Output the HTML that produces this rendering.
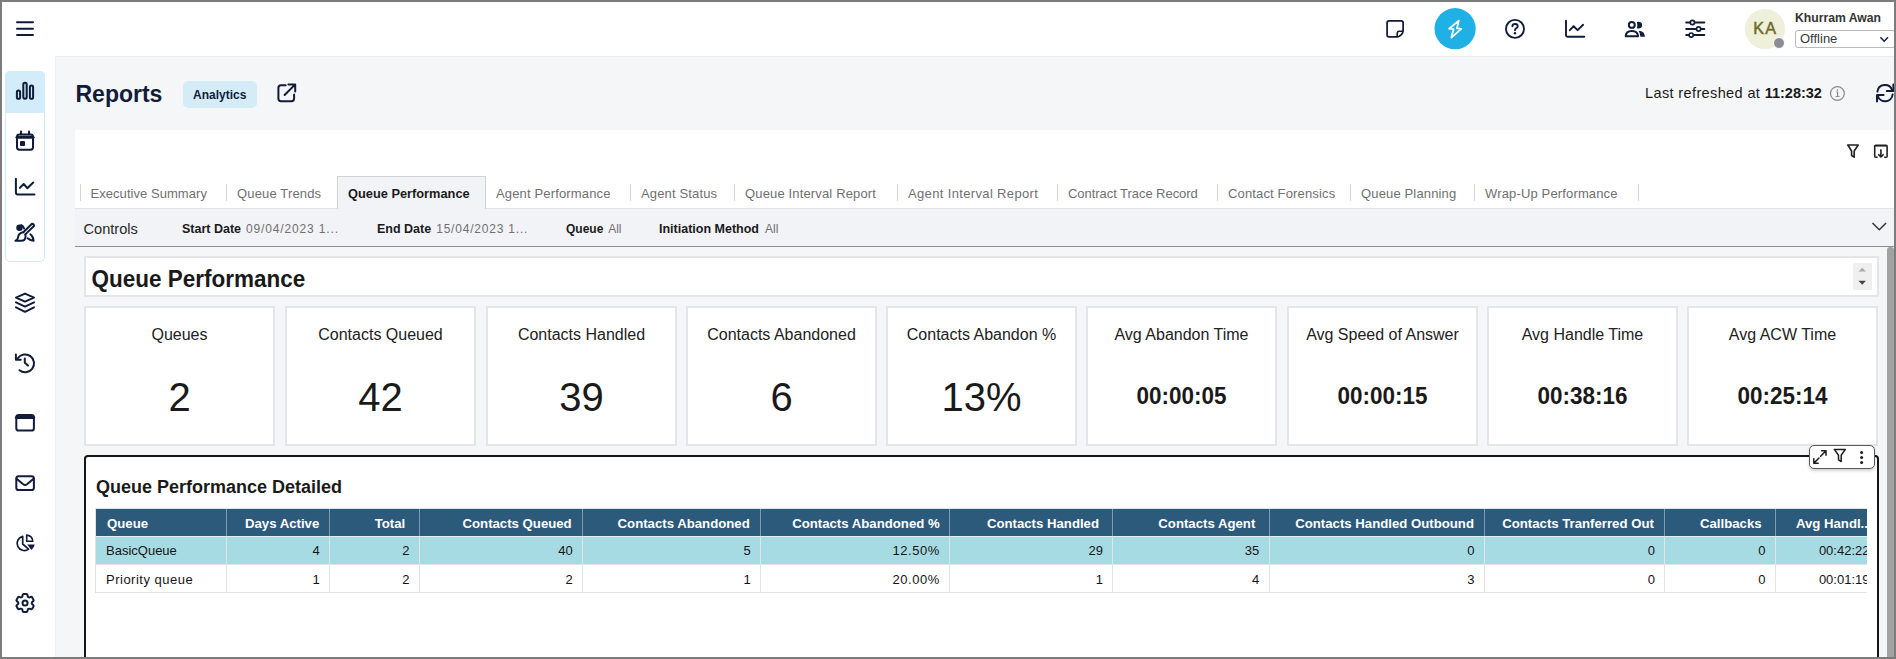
<!DOCTYPE html>
<html><head><meta charset="utf-8">
<style>
*{box-sizing:border-box;margin:0;padding:0}
html,body{width:1896px;height:659px;overflow:hidden;background:#fff;font-family:"Liberation Sans",sans-serif;}
.a{position:absolute}
.t{position:absolute;white-space:nowrap;line-height:1}
svg.ov{position:absolute;left:0;top:0;width:1896px;height:659px;overflow:visible}
.nv{stroke:#111c3a;fill:none;stroke-width:2;stroke-linecap:round;stroke-linejoin:round}
.tab{position:absolute;top:187px;font-size:13px;color:#707070;white-space:nowrap;line-height:1;letter-spacing:0.15px}
.sep{position:absolute;top:184px;width:1px;height:17px;background:#d5d5d5}
.kpi{position:absolute;top:306px;width:191px;height:140px;background:#fff;border:2px solid #e4e5e8}
.kl{position:absolute;left:0;right:0;top:19px;text-align:center;font-size:16px;color:#222;line-height:1;white-space:nowrap}
.kv{position:absolute;left:0;right:0;top:68.8px;text-align:center;font-size:40px;color:#1a1a1a;line-height:1}
.th{position:absolute;top:8.5px;font-size:13.2px;font-weight:bold;color:#fff;white-space:nowrap;line-height:1}
.td{position:absolute;font-size:13px;color:#141414;white-space:nowrap;line-height:1}
.kt{position:absolute;left:0;right:0;top:78px;text-align:center;font-size:22.5px;font-weight:bold;color:#1a1a1a;line-height:1;transform:scaleY(1.1);transform-origin:50% 19px}
</style></head><body>
<!-- page bg -->
<div class="a" style="left:55px;top:56px;width:1841px;height:603px;background:#f5f6f8;border-top:1px solid #ebecee;border-left:1px solid #f0f1f3"></div>

<!-- sidebar group -->
<div class="a" style="left:5px;top:71px;width:40px;height:191px;border:1px solid #cfe9f5;border-radius:5px;background:#fff"></div>
<div class="a" style="left:5px;top:71px;width:40px;height:42px;background:#d2edf9;border-radius:5px 5px 0 0"></div>

<!-- Reports header -->
<div class="t" style="left:75.5px;top:82.5px;font-size:23px;font-weight:bold;color:#111c3a">Reports</div>
<div class="a" style="left:183px;top:81px;width:74px;height:27px;background:#d3ecf8;border-radius:5px"></div>
<div class="t" style="left:193px;top:89px;font-size:12px;font-weight:bold;color:#111c3a">Analytics</div>
<div class="t" style="left:1645px;top:86px;font-size:14.5px;letter-spacing:0.38px;color:#1a1a1a">Last refreshed at <b style="letter-spacing:0">11:28:32</b></div>

<!-- user -->
<div class="a" style="left:1745px;top:8.7px;width:40px;height:40px;border-radius:50%;background:#eef0d9"></div>
<div class="t" style="left:1753.2px;top:20px;font-size:16.2px;letter-spacing:1.3px;color:#6e6a26;-webkit-text-stroke:0.45px #6e6a26">KA</div>
<div class="a" style="left:1773px;top:36.7px;width:12px;height:12px;border-radius:50%;background:#8a8c99;border:1px solid #fff"></div>
<div class="t" style="left:1795px;top:11.7px;font-size:12.2px;font-weight:bold;color:#333">Khurram Awan</div>
<div class="a" style="left:1795px;top:30px;width:101px;height:18px;border:1px solid #b9b9b9;border-radius:3px;background:#fff"></div>
<div class="t" style="left:1800px;top:32.3px;font-size:13px;color:#3a3a3a">Offline</div>

<!-- white tabs card -->
<div class="a" style="left:75px;top:130px;width:1819px;height:78px;background:#fff"></div>
<div class="a" style="left:75px;top:208px;width:1819px;height:1px;background:#e3e3e3"></div>
<div class="a" style="left:75px;top:209px;width:1819px;height:37px;background:#f2f3f6"></div>
<div class="a" style="left:75px;top:246px;width:1819px;height:1px;background:#8c8c8c"></div>
<!-- active tab -->
<div class="a" style="left:337px;top:176px;width:149px;height:33px;background:#f2f3f6;border:1px solid #d3d3d3;border-bottom:none"></div>
<div class="sep" style="left:80px"></div>
<div class="tab" style="left:90.5px;letter-spacing:0.05px">Executive Summary</div>
<div class="sep" style="left:226px"></div>
<div class="tab" style="left:237px">Queue Trends</div>
<div class="tab" style="left:348px;top:188px;font-weight:bold;color:#1a1a1a;font-size:12.8px;letter-spacing:0">Queue Performance</div>
<div class="tab" style="left:496px">Agent Performance</div>
<div class="sep" style="left:630px"></div>
<div class="tab" style="left:641px">Agent Status</div>
<div class="sep" style="left:734px"></div>
<div class="tab" style="left:745px">Queue Interval Report</div>
<div class="sep" style="left:897px"></div>
<div class="tab" style="left:908px;letter-spacing:0.35px">Agent Interval Report</div>
<div class="sep" style="left:1057px"></div>
<div class="tab" style="left:1068px;letter-spacing:-0.05px">Contract Trace Record</div>
<div class="sep" style="left:1217px"></div>
<div class="tab" style="left:1228px">Contact Forensics</div>
<div class="sep" style="left:1350px"></div>
<div class="tab" style="left:1361px">Queue Planning</div>
<div class="sep" style="left:1474px"></div>
<div class="tab" style="left:1485px">Wrap-Up Performance</div>
<div class="sep" style="left:1638px"></div>

<!-- controls -->
<div class="t" style="left:83.5px;top:222px;font-size:14.6px;color:#2a2a2a">Controls</div>
<div class="t" style="left:182px;top:223px;font-size:12.5px;font-weight:bold;color:#1a1a1a">Start Date <span style="font-weight:normal;color:#707070;letter-spacing:0.85px;font-size:12px;margin-left:1.5px">09/04/2023 1...</span></div>
<div class="t" style="left:377px;top:223px;font-size:12.5px;font-weight:bold;color:#1a1a1a">End Date <span style="font-weight:normal;color:#707070;letter-spacing:0.8px;font-size:12px;margin-left:1.5px">15/04/2023 1...</span></div>
<div class="t" style="left:566px;top:223px;font-size:12px;font-weight:bold;color:#1a1a1a">Queue <span style="font-weight:normal;color:#707070;margin-left:1.5px">All</span></div>
<div class="t" style="left:659px;top:223px;font-size:12.5px;font-weight:bold;color:#1a1a1a">Initiation Method <span style="font-weight:normal;color:#707070;font-size:12px;margin-left:2.5px">All</span></div>

<!-- title card -->
<div class="a" style="left:84px;top:256px;width:1795px;height:41px;background:#fff;border:2px solid #e4e5e8"></div>
<div class="t" style="left:91.5px;top:268.5px;font-size:22.5px;font-weight:bold;color:#1a1a1a;transform:scaleY(1.08);transform-origin:0 19px">Queue Performance</div>
<div class="a" style="left:1853px;top:263px;width:19px;height:27px;background:#efefef"></div>

<!-- KPI cards -->
<div class="kpi" style="left:84px"><div class="kl">Queues</div><div class="kv">2</div></div>
<div class="kpi" style="left:285px"><div class="kl">Contacts Queued</div><div class="kv">42</div></div>
<div class="kpi" style="left:486px"><div class="kl">Contacts Handled</div><div class="kv">39</div></div>
<div class="kpi" style="left:686px"><div class="kl">Contacts Abandoned</div><div class="kv">6</div></div>
<div class="kpi" style="left:886px"><div class="kl">Contacts Abandon %</div><div class="kv">13%</div></div>
<div class="kpi" style="left:1086px"><div class="kl">Avg Abandon Time</div><div class="kt">00:00:05</div></div>
<div class="kpi" style="left:1287px"><div class="kl">Avg Speed of Answer</div><div class="kt">00:00:15</div></div>
<div class="kpi" style="left:1487px"><div class="kl">Avg Handle Time</div><div class="kt">00:38:16</div></div>
<div class="kpi" style="left:1687px"><div class="kl">Avg ACW Time</div><div class="kt">00:25:14</div></div>

<!-- table card -->
<div class="a" style="left:84px;top:455px;width:1795px;height:230px;background:#fff;border:2px solid #161616;border-radius:4px"></div>
<div class="t" style="left:96px;top:478px;font-size:18px;font-weight:bold;color:#1a1a1a">Queue Performance Detailed</div>
<!--TBL-->
<div class="a" style="left:95px;top:508px;width:1772px;height:85px;overflow:hidden">
<div class="a" style="left:0;top:0;width:1800px;height:85px;border:1px solid #dfe1e4;background:#fff"></div>
<div class="a" style="left:1px;top:1px;width:1800px;height:27px;background:#2b5a7a"></div>
<div class="a" style="left:1px;top:28px;width:1800px;height:28px;background:#a7dbe4"></div>
<div class="a" style="left:1px;top:28px;width:1800px;height:1px;background:#e4eef2"></div>
<div class="a" style="left:1px;top:56px;width:1800px;height:1px;background:#e2e4e7"></div>
<div class="a" style="left:131.2px;top:1px;width:1px;height:27px;background:#7d9cb0"></div>
<div class="a" style="left:131.2px;top:28px;width:1px;height:56px;background:#e2e4e7"></div>
<div class="a" style="left:234.0px;top:1px;width:1px;height:27px;background:#7d9cb0"></div>
<div class="a" style="left:234.0px;top:28px;width:1px;height:56px;background:#e2e4e7"></div>
<div class="a" style="left:323.7px;top:1px;width:1px;height:27px;background:#7d9cb0"></div>
<div class="a" style="left:323.7px;top:28px;width:1px;height:56px;background:#e2e4e7"></div>
<div class="a" style="left:487.0px;top:1px;width:1px;height:27px;background:#7d9cb0"></div>
<div class="a" style="left:487.0px;top:28px;width:1px;height:56px;background:#e2e4e7"></div>
<div class="a" style="left:665.0px;top:1px;width:1px;height:27px;background:#7d9cb0"></div>
<div class="a" style="left:665.0px;top:28px;width:1px;height:56px;background:#e2e4e7"></div>
<div class="a" style="left:854.0px;top:1px;width:1px;height:27px;background:#7d9cb0"></div>
<div class="a" style="left:854.0px;top:28px;width:1px;height:56px;background:#e2e4e7"></div>
<div class="a" style="left:1017.3px;top:1px;width:1px;height:27px;background:#7d9cb0"></div>
<div class="a" style="left:1017.3px;top:28px;width:1px;height:56px;background:#e2e4e7"></div>
<div class="a" style="left:1173.6px;top:1px;width:1px;height:27px;background:#7d9cb0"></div>
<div class="a" style="left:1173.6px;top:28px;width:1px;height:56px;background:#e2e4e7"></div>
<div class="a" style="left:1388.7px;top:1px;width:1px;height:27px;background:#7d9cb0"></div>
<div class="a" style="left:1388.7px;top:28px;width:1px;height:56px;background:#e2e4e7"></div>
<div class="a" style="left:1569.2px;top:1px;width:1px;height:27px;background:#7d9cb0"></div>
<div class="a" style="left:1569.2px;top:28px;width:1px;height:56px;background:#e2e4e7"></div>
<div class="a" style="left:1679.9px;top:1px;width:1px;height:27px;background:#7d9cb0"></div>
<div class="a" style="left:1679.9px;top:28px;width:1px;height:56px;background:#e2e4e7"></div>
<div class="th" style="left:12.0px">Queue</div>
<div class="th" style="left:131.2px;width:93.1px;text-align:right">Days Active</div>
<div class="th" style="left:234.0px;width:76.2px;text-align:right">Total</div>
<div class="th" style="left:323.7px;width:153.0px;text-align:right">Contacts Queued</div>
<div class="th" style="left:487.0px;width:167.7px;text-align:right">Contacts Abandoned</div>
<div class="th" style="left:665.0px;width:179.7px;text-align:right">Contacts Abandoned %</div>
<div class="th" style="left:854.0px;width:150.0px;text-align:right">Contacts Handled</div>
<div class="th" style="left:1017.3px;width:143.0px;text-align:right">Contacts Agent</div>
<div class="th" style="left:1173.6px;width:205.4px;text-align:right">Contacts Handled Outbound</div>
<div class="th" style="left:1388.7px;width:170.2px;text-align:right">Contacts Tranferred Out</div>
<div class="th" style="left:1569.2px;width:97.4px;text-align:right">Callbacks</div>
<div class="th" style="left:1700.9px">Avg Handl...</div>
<div class="td" style="top:35.5px;left:11.0px">BasicQueue</div>
<div class="td" style="top:35.5px;left:131.2px;width:93.5px;text-align:right">4</div>
<div class="td" style="top:35.5px;left:234.0px;width:80.4px;text-align:right">2</div>
<div class="td" style="top:35.5px;left:323.7px;width:154.0px;text-align:right">40</div>
<div class="td" style="top:35.5px;left:487.0px;width:168.7px;text-align:right">5</div>
<div class="td" style="top:35.5px;left:665.0px;width:179.7px;text-align:right"><span style="letter-spacing:0.5px">12.50%</span></div>
<div class="td" style="top:35.5px;left:854.0px;width:154.0px;text-align:right">29</div>
<div class="td" style="top:35.5px;left:1017.3px;width:147.0px;text-align:right">35</div>
<div class="td" style="top:35.5px;left:1173.6px;width:205.8px;text-align:right">0</div>
<div class="td" style="top:35.5px;left:1388.7px;width:171.2px;text-align:right">0</div>
<div class="td" style="top:35.5px;left:1569.2px;width:101.4px;text-align:right">0</div>
<div class="td" style="top:35.5px;left:1723.9px">00:42:22</div>
<div class="td" style="top:64.5px;left:11.0px"><span style="letter-spacing:0.5px">Priority queue</span></div>
<div class="td" style="top:64.5px;left:131.2px;width:93.5px;text-align:right">1</div>
<div class="td" style="top:64.5px;left:234.0px;width:80.4px;text-align:right">2</div>
<div class="td" style="top:64.5px;left:323.7px;width:154.0px;text-align:right">2</div>
<div class="td" style="top:64.5px;left:487.0px;width:168.7px;text-align:right">1</div>
<div class="td" style="top:64.5px;left:665.0px;width:179.7px;text-align:right"><span style="letter-spacing:0.5px">20.00%</span></div>
<div class="td" style="top:64.5px;left:854.0px;width:154.0px;text-align:right">1</div>
<div class="td" style="top:64.5px;left:1017.3px;width:147.0px;text-align:right">4</div>
<div class="td" style="top:64.5px;left:1173.6px;width:205.8px;text-align:right">3</div>
<div class="td" style="top:64.5px;left:1388.7px;width:171.2px;text-align:right">0</div>
<div class="td" style="top:64.5px;left:1569.2px;width:101.4px;text-align:right">0</div>
<div class="td" style="top:64.5px;left:1723.9px">00:01:19</div>
</div>
<!--/TBL-->

<!-- scrollbar -->
<div class="a" style="left:1887px;top:247px;width:7px;height:412px;background:#a2a2a2;border-radius:3px 3px 0 0"></div>

<svg class="ov" viewBox="0 0 1896 659">
 <!-- hamburger -->
 <g class="nv"><path d="M17 22.3H33M17 28.7H33M17 35H33"/></g>
 <!-- sidebar icons -->
 <g class="nv" stroke-width="1.7">
  <rect x="16.9" y="90.4" width="3.2" height="8.4" rx="1.6"/>
  <rect x="23.3" y="82.8" width="3.4" height="16" rx="1.7"/>
  <rect x="29.9" y="85.6" width="3.2" height="13.2" rx="1.6"/>
 </g>
 <g class="nv" stroke-width="1.8">
  <rect x="17" y="134.5" width="16" height="15.2" rx="2.4"/>
  <path d="M17 137.2H33" stroke-width="3"/>
  <path d="M21 131.5V134M29 131.5V134"/>
 </g>
 <rect x="20" y="140.9" width="5" height="5" rx="1" fill="#111c3a"/>
 <g class="nv" stroke-width="1.8">
  <path d="M15.9 178.8V192.5Q15.9 194.5 17.9 194.5H34.5"/>
  <path d="M19.8 187.9L23.7 184L27.3 188.2L33.2 182.5"/>
 </g>
 <!-- brush -->
 <g class="nv" stroke-width="1.65">
  <path d="M25.3 234.4L34 226Q33.9 223.8 32 223.8L23.3 232.2"/>
  <path d="M23.3 232.2Q18.3 233 18 237.6Q17.6 240.1 15.4 240.7H21.4Q25.4 240.6 25.5 236.4Q25.6 235 25.3 234.4"/>
  <path d="M27.6 238.3Q30.3 240.6 33.6 240.8Q33.3 236.6 30.4 234.3"/>
  <path d="M21.3 225.1Q23.5 225.8 24.1 228.6"/>
 </g>
 <circle cx="19.5" cy="227.7" r="3.25" fill="#111c3a"/>
 <!-- layers -->
 <g class="nv" stroke-width="1.8">
  <path d="M25 293.6L34 297.6L25 301.6L16 297.6Z"/>
  <path d="M16 302.3L25 306.6L34 302.3"/>
  <path d="M16 307.3L25 311.8L34 307.3"/>
 </g>
 <!-- history -->
 <g class="nv" stroke-width="1.8">
  <path d="M17.8 358.3A8.9 8.9 0 1 1 19.5 370.2"/>
  <path d="M15.9 354.6V359.7H20.7"/>
  <path d="M24.8 358.4V362.8L28 365.6"/>
 </g>
 <!-- browser -->
 <g class="nv" stroke-width="1.8">
  <rect x="16.3" y="415" width="17.6" height="15.6" rx="2.4"/>
  <path d="M16.5 417.5H33.5" stroke-width="3.2"/>
 </g>
 <!-- mail -->
 <g class="nv" stroke-width="1.8">
  <rect x="16.3" y="476.2" width="17.6" height="13.9" rx="2.4"/>
  <path d="M16.6 478.7L23.2 484.2Q25.1 485.6 27 484.2L33.6 478.7"/>
 </g>
 <!-- pie -->
 <g class="nv" stroke-width="1.8">
  <path d="M22.7 536.3A7.2 7.2 0 1 0 28.6 549.1L22.7 544Z" stroke-width="1.7"/>
  <path d="M26.7 535.1V541.2H32.8A6.1 6.1 0 0 0 26.7 535.1Z" stroke-width="1.6"/>
 </g>
 <path d="M27.2 544.4H34.7Q34.2 547.6 31.5 549.9Z" fill="#111c3a"/>
 <!-- gear -->
 <g class="nv" stroke-width="1.65" transform="translate(13.05 591.05)">
  <path d="M9.594 3.94c.09-.542.56-.94 1.11-.94h2.593c.55 0 1.02.398 1.11.94l.213 1.281c.063.374.313.686.645.87.074.04.147.083.22.127.325.196.72.257 1.075.124l1.217-.456a1.125 1.125 0 0 1 1.37.49l1.296 2.247a1.125 1.125 0 0 1-.26 1.431l-1.003.827c-.293.241-.438.613-.43.992a7.723 7.723 0 0 1 0 .255c-.008.378.137.75.43.991l1.004.827c.424.35.534.955.26 1.43l-1.298 2.247a1.125 1.125 0 0 1-1.369.491l-1.217-.456c-.355-.133-.75-.072-1.076.124a6.47 6.47 0 0 1-.22.128c-.331.183-.581.495-.644.869l-.213 1.281c-.09.543-.56.94-1.11.94h-2.594c-.55 0-1.019-.398-1.11-.94l-.213-1.281c-.062-.374-.312-.686-.644-.87a6.52 6.52 0 0 1-.22-.127c-.325-.196-.72-.257-1.076-.124l-1.217.456a1.125 1.125 0 0 1-1.369-.49l-1.297-2.247a1.125 1.125 0 0 1 .26-1.431l1.004-.827c.292-.24.437-.613.43-.991a6.932 6.932 0 0 1 0-.255c.007-.38-.138-.751-.43-.992l-1.004-.827a1.125 1.125 0 0 1-.26-1.43l1.297-2.247a1.125 1.125 0 0 1 1.37-.491l1.216.456c.356.133.751.072 1.076-.124.072-.044.146-.086.22-.128.332-.183.582-.495.644-.869l.214-1.28Z"/>
  <circle cx="12" cy="12" r="2.55"/>
 </g>
 <!-- external link -->
 <g class="nv" stroke-width="2">
  <path d="M285.7 85.3H281Q278.4 85.3 278.4 88V98.6Q278.4 101.2 281 101.2H291.5Q294.1 101.2 294.1 98.6V94.4"/>
  <path d="M284.6 95L295 84.6M288.4 84.6H295.2V91.4"/>
 </g>
 <!-- info -->
 <circle cx="1837.4" cy="93.5" r="6.9" fill="none" stroke="#8d8d8d" stroke-width="1.3"/>
 <path d="M1836.3 92H1837.6V96.3M1835.6 96.5H1839.4" fill="none" stroke="#8d8d8d" stroke-width="1.2"/>
 <circle cx="1837.5" cy="90" r="0.85" fill="#8d8d8d"/>
 <!-- refresh -->
 <g class="nv" stroke-width="1.95" stroke-linecap="butt">
  <path d="M1877.4 91.6A7.6 7.6 0 0 1 1892 89.8"/>
  <path d="M1886.8 91H1893.4V84.4"/>
  <path d="M1892.6 94.5A7.6 7.6 0 0 1 1877.9 96.3"/>
  <path d="M1883.6 95H1877V101.6"/>
 </g>
 <!-- header icons -->
 <g class="nv" stroke-width="2">
  <path d="M1403.1 30.5V22.8Q1403.1 20.9 1401.2 20.9H1389Q1387.1 20.9 1387.1 22.8V35Q1387.1 36.9 1389 36.9H1397Q1399 36.9 1400.5 35.4L1401.6 34.3Q1403.1 32.8 1403.1 30.5Z" stroke-width="1.75"/>
  <path d="M1397.2 36.6V33.4Q1397.2 31.3 1399.3 31.3H1402.9" stroke-width="1.6"/>
 </g>
 <circle cx="1455.1" cy="28.7" r="20.6" fill="#1fb1e6"/>
 <path d="M1458.8 20.6L1449.1 28.7L1453.6 29.1L1451.4 37.6L1461.2 28.8L1456.9 28.4Z" fill="none" stroke="#fff" stroke-width="1.8" stroke-linejoin="round"/>
 <g class="nv" stroke-width="2">
  <circle cx="1515" cy="28.9" r="9" stroke-width="1.9"/>
  <path d="M1512.4 26.3Q1512.5 24 1515 24Q1517.7 24 1517.7 26.3Q1517.7 27.8 1515.8 28.6Q1515 29 1515 30.3" stroke-width="1.9"/>
 </g>
 <circle cx="1515" cy="33.3" r="1.2" fill="#111c3a"/>
 <g class="nv" stroke-width="2">
  <path d="M1566 20.8V35.3Q1566 36.8 1567.5 36.8H1584.3" stroke-width="1.9"/>
  <path d="M1569.9 30.2L1573.6 26.2L1577.6 30.1L1583.1 24.8" stroke-width="1.9"/>
 </g>
 <!-- people -->
 <g class="nv" stroke-width="1.6">
  <circle cx="1631.8" cy="24.9" r="2.95"/>
  <path d="M1625.7 36.2Q1626 30.9 1631.8 30.9Q1637.6 30.9 1638.1 36.2Z"/>
 </g>
 <path d="M1636.9 21.9Q1642.1 21.3 1642.1 25.15Q1642.1 29 1636.9 28.4Q1637.9 25.15 1636.9 21.9Z" fill="#111c3a"/>
 <path d="M1638.6 30.8Q1644.6 31 1644.9 36.8H1640.4Q1640.2 33.2 1638.6 30.8Z" fill="#111c3a"/>
 <!-- sliders -->
 <g class="nv" stroke-width="1.8">
  <path d="M1686.2 22.5H1704.3M1686.2 29H1704.3M1686.2 35.1H1704.3"/>
 </g>
 <g fill="#fff" stroke="#111c3a" stroke-width="1.7">
  <circle cx="1692.4" cy="22.5" r="2.1"/>
  <circle cx="1698.6" cy="29" r="2.1"/>
  <circle cx="1691.2" cy="35.1" r="2.1"/>
 </g>
 <!-- offline chevron -->
 <path d="M1880.4 37.2L1884.2 41.3L1888 37.2" fill="none" stroke="#111c3a" stroke-width="1.4"/>

 <!-- filter / export -->
 <g fill="none" stroke="#222" stroke-width="1.6" stroke-linejoin="round">
  <path d="M1847.8 145H1858.2L1854.2 151V157.2L1851.6 155.5V151Z"/>
  <path d="M1877.6 157.3H1875.7Q1874.7 157.3 1874.7 156.3V146.3Q1874.7 145.3 1875.7 145.3H1886.1Q1887.1 145.3 1887.1 146.3V156.3Q1887.1 157.3 1886.1 157.3H1884.2M1880.9 149.3V156.8M1878.2 154.2L1880.9 156.9L1883.6 154.2"/>
  <path d="M1875 145.9H1886.8" stroke-width="1.4"/>
 </g>
 <!-- controls chevron -->
 <path d="M1872.5 223L1879.3 229.8L1886.1 223" fill="none" stroke="#333" stroke-width="1.5"/>
 <!-- stepper -->
 <path d="M1858.5 271.6L1862.2 267.8L1865.9 271.6Z" fill="#aaa"/>
 <path d="M1858.5 280.8L1862.2 284.7L1865.9 280.8Z" fill="#444"/>
</svg>

<!-- table toolbar -->
<div class="a" style="left:1809px;top:445px;width:66px;height:24px;background:#fff;border:1px solid #5a5a5a;border-radius:5px;box-shadow:0 2px 3px rgba(0,0,0,0.18)"></div>
<svg class="ov" viewBox="0 0 1896 659">
 <g fill="none" stroke="#1e1e1e" stroke-width="1.5" stroke-linecap="round" stroke-linejoin="round">
  <path d="M1820.6 456.2L1825.8 451M1821.6 450.8H1826V455.2M1819 458L1813.8 463.2M1813.8 458.8V463.2H1818.2"/>
  <path d="M1834.3 449.4H1845.3L1841.2 455.3V461.5L1838.5 459.8V455.3Z"/>
 </g>
 <circle cx="1861.6" cy="452.5" r="1.5" fill="#1e1e1e"/>
 <circle cx="1861.6" cy="457.6" r="1.5" fill="#1e1e1e"/>
 <circle cx="1861.6" cy="462.6" r="1.5" fill="#1e1e1e"/>
</svg>

<!-- outer frame -->
<div class="a" style="left:0;top:0;width:2px;height:659px;background:#7c7c7c"></div>
<div class="a" style="left:0;top:0;width:1896px;height:2px;background:#7c7c7c"></div>
<div class="a" style="left:1894px;top:0;width:2px;height:659px;background:#7c7c7c"></div>
<div class="a" style="left:0;top:657px;width:1896px;height:2px;background:#7c7c7c"></div>
</body></html>
